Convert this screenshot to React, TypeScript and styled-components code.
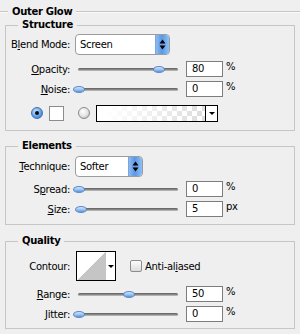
import styled, { createGlobalStyle } from 'styled-components';

const GlobalStyle = createGlobalStyle`
  html, body {
    margin: 0;
    padding: 0;
    background: #efefef;
  }
  body {
    font-family: "DejaVu Sans", Tahoma, sans-serif;
    font-size: 10px;
    letter-spacing: -0.3px;
    color: #000;
  }
`;

const Panel = styled.div`
  width: 300px;
  height: 334px;
  box-sizing: border-box;
  padding-top: 5px;
  background: #efefef;
  overflow: hidden;
`;

const Header = styled.div`
  display: flex;
  align-items: center;
  height: 14px;

  &::before,
  &::after {
    content: '';
    border-top: 1px solid #c6c6c6;
    border-bottom: 1px solid #fafafa;
  }
  &::before {
    width: 8px;
  }
  &::after {
    flex: 1;
  }
`;

const HeaderTitle = styled.span`
  padding: 0 4px;
  font-weight: 700;
  line-height: 14px;
`;

const Group = styled.fieldset<{ $mt: number }>`
  margin: ${(p) => p.$mt}px 5px 0;
  padding: 0;
  min-width: 0;
  border: 1px solid #c6c6c6;
`;

const Legend = styled.legend`
  margin-left: 12px;
  padding: 0 4px;
  font-weight: 700;
  line-height: 12px;
`;

const GroupBody = styled.div<{ $pb: number }>`
  padding-bottom: ${(p) => p.$pb}px;
`;

const Row = styled.div<{ $h: number; $mt: number; $indent?: number }>`
  display: flex;
  align-items: center;
  height: ${(p) => p.$h}px;
  margin-top: ${(p) => p.$mt}px;
  padding-left: ${(p) => p.$indent || 0}px;
`;

const Label = styled.label`
  flex-shrink: 0;
  width: 64px;
  margin-right: 6px;
  text-align: right;
  white-space: nowrap;
`;

const Key = styled.u`
  text-decoration: underline;
  text-underline-offset: 1px;
`;

const Select = styled.div<{ $w: number }>`
  display: flex;
  width: ${(p) => p.$w}px;
  height: 21px;
  margin-left: -1px;
  box-sizing: border-box;
  border: 1px solid #9c9c9c;
  border-radius: 4px;
  background: #fff;
  overflow: hidden;
`;

const SelectText = styled.span`
  flex: 1;
  padding-left: 4px;
  line-height: 19px;
`;

const SelectButton = styled.span`
  display: flex;
  align-items: center;
  justify-content: center;
  width: 13px;
  border-left: 1px solid #7aa6e0;
  background: linear-gradient(to right, #8fbaf0, #5b97e4 45%, #8cc0f6);
`;

const SliderBox = styled.div`
  position: relative;
  display: flex;
  align-items: center;
  width: 104px;
  height: 18px;
`;

const Track = styled.div`
  flex: 1;
  height: 3px;
  margin: 0 2px;
  border-radius: 2px;
  background: linear-gradient(#5e5e5e, #8e8e8e 60%, #c9c9c9);
`;

const Thumb = styled.div`
  position: absolute;
  top: 50%;
  width: 10px;
  height: 5px;
  margin: -3px 0 0 -5px;
  border: 1px solid #5b86c6;
  border-radius: 50%;
  background: linear-gradient(#d6e8fb, #8fbcef 60%, #5c93d8);
`;

const NumberBox = styled.div`
  width: 37px;
  height: 16px;
  margin-left: 6px;
  padding-left: 5px;
  box-sizing: border-box;
  border: 1px solid #7d7d7d;
  background: #fff;
  line-height: 14px;
`;

const Unit = styled.span`
  align-self: flex-start;
  margin: 1px 0 0 3px;
`;

const Radio = styled.span<{ $on?: boolean }>`
  display: flex;
  align-items: center;
  justify-content: center;
  width: 12px;
  height: 12px;
  box-sizing: border-box;
  border: 1px solid ${(p) => (p.$on ? '#3d6fb8' : '#8a8a8a')};
  border-radius: 50%;
  background: ${(p) =>
    p.$on
      ? 'radial-gradient(circle at 40% 35%, #cfe5ff, #5a9be8 60%, #2d64b8)'
      : 'radial-gradient(circle at 40% 35%, #ffffff, #e2e2e2 55%, #a9a9a9)'};

  &::after {
    content: '';
    width: 4px;
    height: 4px;
    border-radius: 50%;
    background: ${(p) => (p.$on ? '#0d0d0d' : 'transparent')};
  }
`;

const Swatch = styled.span`
  width: 15px;
  height: 15px;
  margin: 0 14px 0 6px;
  box-sizing: border-box;
  border: 1px solid #8c8c8c;
  background: #fff;
`;

const GradientPicker = styled.div`
  display: flex;
  width: 122px;
  height: 17px;
  margin-left: 6px;
  box-sizing: border-box;
  border: 1px solid #000;
`;

const GradientPreview = styled.span`
  flex: 1;
  background:
    linear-gradient(to right, #fff 8%, rgba(255, 255, 255, 0) 95%),
    repeating-conic-gradient(#dedede 0 25%, #fff 0 50%) 0 0 / 10px 10px;
`;

const DropArrow = styled.span<{ $w: number; $divider?: boolean }>`
  display: flex;
  align-items: center;
  justify-content: center;
  width: ${(p) => p.$w}px;
  border-left: ${(p) => (p.$divider ? '1px solid #000' : 'none')};
  background: #fff;

  &::after {
    content: '';
    border-left: 3px solid transparent;
    border-right: 3px solid transparent;
    border-top: 3px solid #000;
  }
`;

const ContourPicker = styled.div`
  display: flex;
  width: 40px;
  height: 30px;
  box-sizing: border-box;
  border: 1px solid #000;
`;

const ContourPreview = styled.span`
  width: 29px;
  background: linear-gradient(to top left, #c5c5c5 50%, #fff 50%);
`;

const CheckBox = styled.span`
  width: 12px;
  height: 12px;
  margin-left: 14px;
  box-sizing: border-box;
  border: 1px solid #8d8d8d;
  border-radius: 2px;
  background: linear-gradient(#fdfdfd, #dcdcdc);
`;

const CheckLabel = styled.span`
  margin-left: 3px;
`;

const SpinArrows = () => (
  <svg width="7" height="11" viewBox="0 0 7 11">
    <path d="M3.5 0.5 L6.5 4.5 H0.5 Z" fill="#000" />
    <path d="M3.5 10.5 L6.5 6.5 H0.5 Z" fill="#000" />
  </svg>
);

const Slider = ({ value, max }: { value: number; max: number }) => (
  <SliderBox>
    <Track />
    <Thumb style={{ left: 2 + (value / max) * 100 }} />
  </SliderBox>
);

type ValueRowProps = {
  label: React.ReactNode;
  value: number;
  max: number;
  unit: string;
  mt: number;
};

const ValueRow = ({ label, value, max, unit, mt }: ValueRowProps) => (
  <Row $h={18} $mt={mt}>
    <Label>{label}</Label>
    <Slider value={value} max={max} />
    <NumberBox>{value}</NumberBox>
    <Unit>{unit}</Unit>
  </Row>
);

const App = () => {
  return (
    <Panel>
      <GlobalStyle />
      <Header>
        <HeaderTitle>Outer Glow</HeaderTitle>
      </Header>

      <Group $mt={0}>
        <Legend>Structure</Legend>
        <GroupBody $pb={8}>
          <Row $h={21} $mt={3}>
            <Label>B<Key>l</Key>end Mode:</Label>
            <Select $w={95}>
              <SelectText>Screen</SelectText>
              <SelectButton><SpinArrows /></SelectButton>
            </Select>
          </Row>
          <ValueRow label={<><Key>O</Key>pacity:</>} value={80} max={100} unit="%" mt={5} />
          <ValueRow label={<><Key>N</Key>oise:</>} value={0} max={100} unit="%" mt={2} />
          <Row $h={18} $mt={6} $indent={25}>
            <Radio $on />
            <Swatch />
            <Radio />
            <GradientPicker>
              <GradientPreview />
              <DropArrow $w={11} $divider />
            </GradientPicker>
          </Row>
        </GroupBody>
      </Group>

      <Group $mt={9}>
        <Legend>Elements</Legend>
        <GroupBody $pb={6}>
          <Row $h={21} $mt={4}>
            <Label><Key>T</Key>echnique:</Label>
            <Select $w={68}>
              <SelectText>Softer</SelectText>
              <SelectButton><SpinArrows /></SelectButton>
            </Select>
          </Row>
          <ValueRow label={<>S<Key>p</Key>read:</>} value={0} max={100} unit="%" mt={3} />
          <ValueRow label={<><Key>S</Key>ize:</>} value={5} max={250} unit="px" mt={2} />
        </GroupBody>
      </Group>

      <Group $mt={10}>
        <Legend>Quality</Legend>
        <GroupBody $pb={5}>
          <Row $h={30} $mt={4}>
            <Label>Contour:</Label>
            <ContourPicker>
              <ContourPreview />
              <DropArrow $w={9} />
            </ContourPicker>
            <CheckBox />
            <CheckLabel>Anti-al<Key>i</Key>ased</CheckLabel>
          </Row>
          <ValueRow label={<><Key>R</Key>ange:</>} value={50} max={100} unit="%" mt={4} />
          <ValueRow label={<><Key>J</Key>itter:</>} value={0} max={100} unit="%" mt={2} />
        </GroupBody>
      </Group>
    </Panel>
  );
};

export default App;
